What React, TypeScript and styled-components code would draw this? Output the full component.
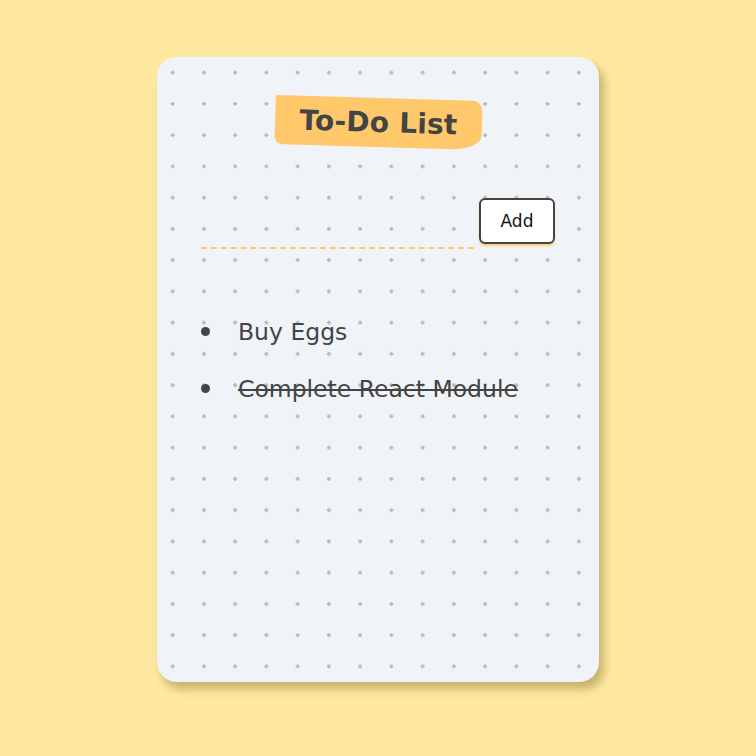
import React, { useState } from "react";
import styled, { createGlobalStyle } from "styled-components";

const GlobalStyle = createGlobalStyle`
  html, body {
    margin: 0;
    padding: 0;
    background: #ffe9a1;
  }
  body {
    font-family: "Comic Sans MS", "DejaVu Sans", sans-serif;
  }
`;

const Page = styled.div`
  min-height: 756px;
  display: flex;
  justify-content: center;
  align-items: flex-start;
  padding-top: 57px;
  box-sizing: border-box;
`;

const Card = styled.div`
  width: 442px;
  height: 625px;
  box-sizing: border-box;
  padding: 41px 44px 0 44px;
  border-radius: 20px;
  background-color: #f0f4f8;
  background-image: radial-gradient(circle at center, #b9bcc0 1.6px, transparent 2.1px);
  background-size: 31.25px 31.25px;
  background-position: 0 0;
  box-shadow: 5px 7px 10px rgba(110, 90, 30, 0.4);
  display: flex;
  flex-direction: column;
`;

const Header = styled.div`
  display: flex;
  justify-content: center;
`;

const TitleBadge = styled.h1`
  margin: 0;
  width: 207px;
  height: 49px;
  box-sizing: border-box;
  display: flex;
  align-items: center;
  justify-content: center;
  background: #ffc96b;
  color: #444;
  font-family: "Comic Sans MS", "DejaVu Sans", sans-serif;
  font-size: 28px;
  font-weight: bold;
  letter-spacing: 0.2px;
  border-radius: 2px 10px 30px 8px / 2px 10px 14px 8px;
  transform: rotate(1.7deg);
  transform-origin: center;
`;

const Form = styled.form`
  margin-top: 51px;
  display: flex;
  align-items: flex-start;
  gap: 5px;
`;

const Input = styled.input`
  flex: 1;
  height: 51px;
  box-sizing: border-box;
  border: none;
  border-bottom: 2px dashed #ffc96b;
  background: transparent;
  outline: none;
  font-family: "Comic Sans MS", "DejaVu Sans", sans-serif;
  font-size: 20px;
  color: #444;
  padding: 0 4px;
`;

const AddButton = styled.button`
  width: 76px;
  height: 46px;
  box-sizing: border-box;
  background: #ffffff;
  border: 2px solid #444;
  border-radius: 6px;
  font-family: "Comic Sans MS", "DejaVu Sans", sans-serif;
  font-size: 17px;
  color: #111;
  cursor: pointer;
  box-shadow: 0 2px 2px rgba(255, 201, 107, 0.85);
`;

const List = styled.ul`
  list-style: none;
  margin: 63px 0 0 0;
  padding: 0;
`;

const Item = styled.li<{ $done?: boolean }>`
  display: flex;
  align-items: center;
  height: 39px;
  margin-bottom: 18px;
  font-size: 23.5px;
  color: #444;
  text-decoration: ${(p) => (p.$done ? "line-through" : "none")};
  text-decoration-thickness: 2px;
  text-decoration-color: #444;

  &::before {
    content: "";
    flex: none;
    width: 9px;
    height: 9px;
    border-radius: 50%;
    background: #444;
    margin-left: 0;
    margin-right: 28px;
  }
`;

export default function App() {
  const [items] = useState([
    { text: "Buy Eggs", done: false },
    { text: "Complete React Module", done: true },
  ]);
  return (
    <>
      <GlobalStyle />
      <Page>
        <Card>
          <Header>
            <TitleBadge>To-Do List</TitleBadge>
          </Header>
          <Form onSubmit={(e) => e.preventDefault()}>
            <Input type="text" />
            <AddButton type="submit">Add</AddButton>
          </Form>
          <List>
            {items.map((it) => (
              <Item key={it.text} $done={it.done}>
                {it.text}
              </Item>
            ))}
          </List>
        </Card>
      </Page>
    </>
  );
}
